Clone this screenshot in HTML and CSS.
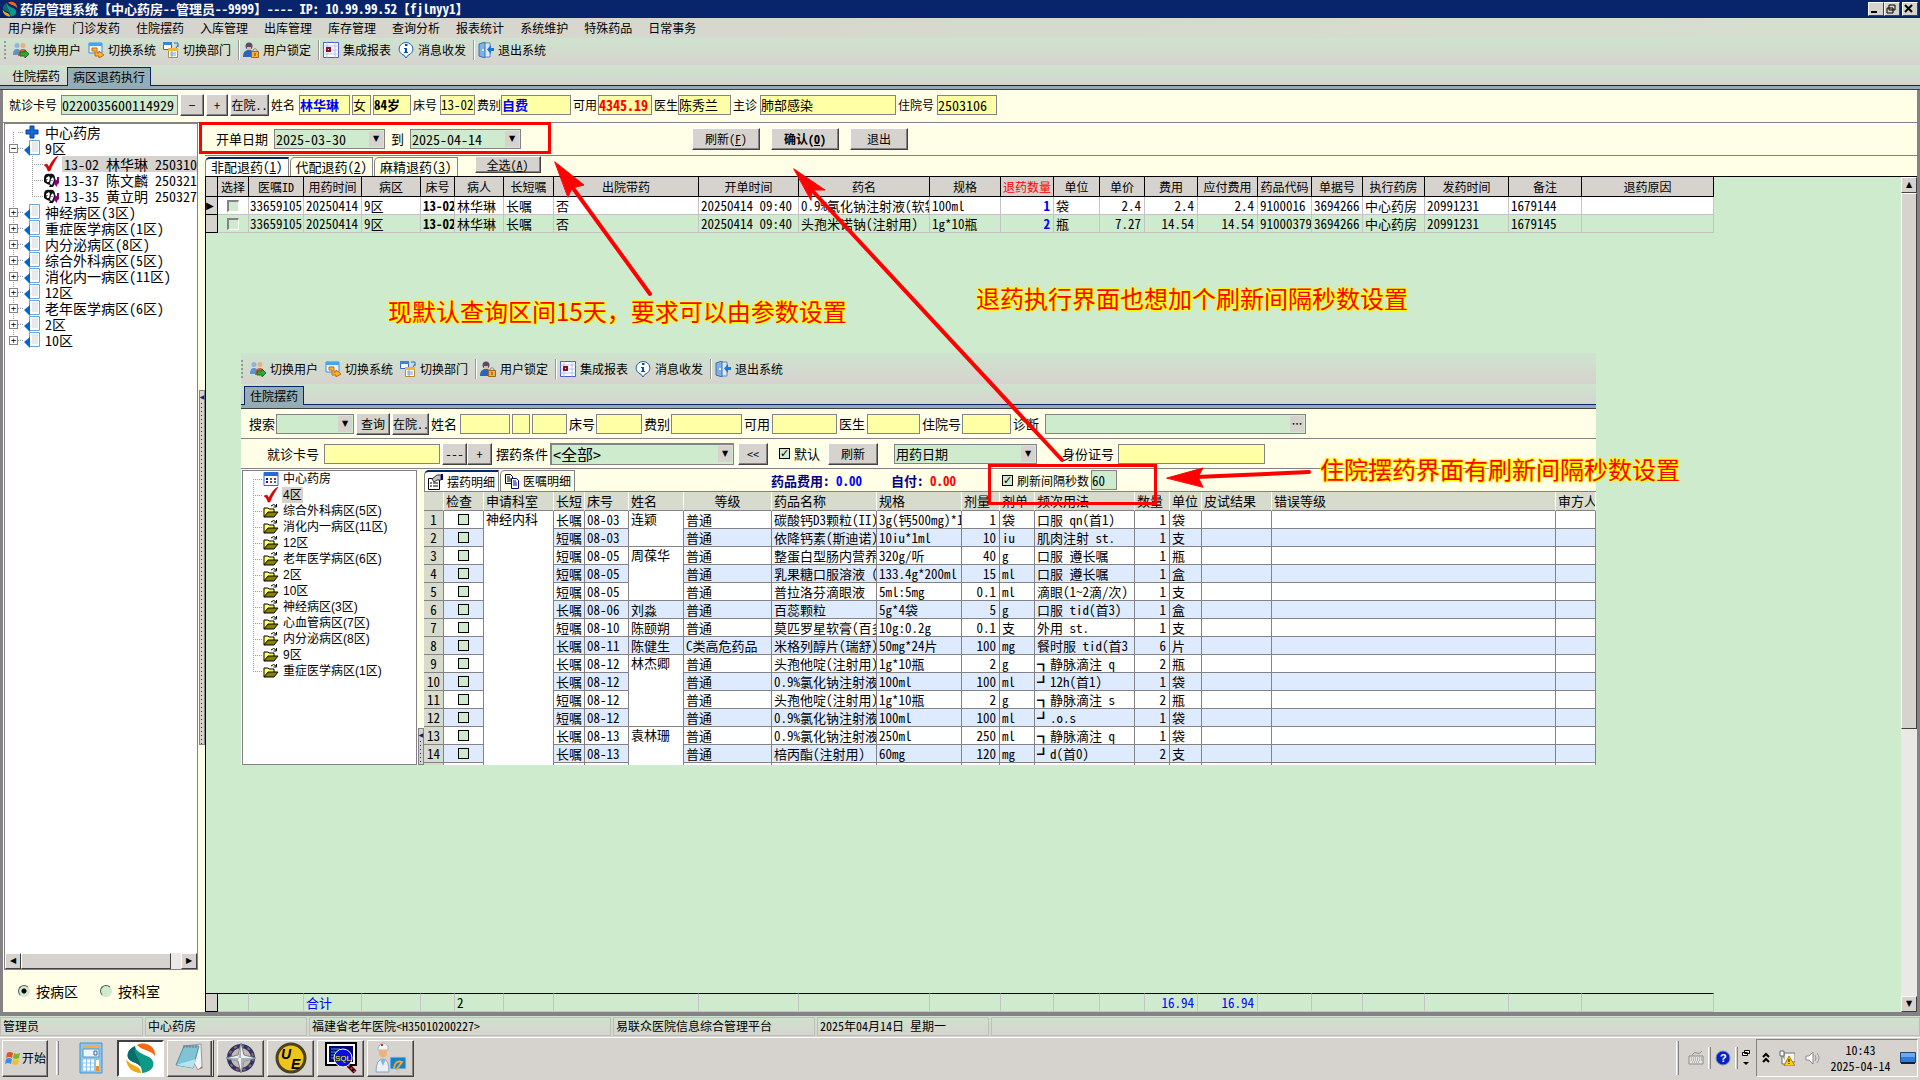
FILE: index.html
```html
<!DOCTYPE html>
<html lang="zh-CN">
<head>
    <meta charset="UTF-8">
    <meta name="viewport" content="width=device-width, initial-scale=1.0">
    <title>药房管理系统</title>
    <link rel="stylesheet" href="styles.css">
</head>
<body>
<svg class="defs" aria-hidden="true">
    <symbol id="i-logo" viewBox="0 0 32 32">
        <path d="M12 3C20-1 31 4 30 14 26 8 18 9 12 3z" fill="#f26a12"/>
        <path d="M10 4C1 8 0 17 8 20c7 2 9 5 9 11 12-1 15-11 7-16C16 11 11 10 10 4z" fill="#0c9a86"/>
        <path d="M10 4C1 8 0 17 8 20c3 1 5 2 7 4 2-5-7-10-5-20z" fill="#0a6b6b"/>
        <path d="M1 17c1 9 7 14 15 14 0-8-10-6-15-14z" fill="#efaa1c"/>
    </symbol>
    <symbol id="i-users" viewBox="0 0 16 16">
        <circle cx="4" cy="3.500" r="2.500" fill="#8fb4dc"/><path d="M0 13c0-5 2-6 4-6s4 1 4 6z" fill="#5b93cf"/>
        <circle cx="10" cy="3.500" r="2.500" fill="#e8b07c"/><path d="M5 14c0-5 2-7 5-7s4 2 4 6z" fill="#d9593f"/>
        <path d="M7 10h5V8l4 4-4 4v-2H7z" fill="#35a535" stroke="#16701c"/>
    </symbol>
    <symbol id="i-system" viewBox="0 0 16 16">
        <path d="M1 1h13v10H1z" fill="#e8f4ff" stroke="#3c8ddb"/><path d="M1 1h13v3H1z" fill="#49a4ee"/>
        <path d="M4 6h5v5h2V9l5 4-5 3v-2H7V9H4z" fill="#ffb52e" stroke="#c8690b"/>
    </symbol>
    <symbol id="i-dept" viewBox="0 0 16 16">
        <path d="M.5.5h8v7h-8z" fill="#fff" stroke="#3166c4"/><path d="M0 0h9v3H0z" fill="#3f7fe0"/>
        <path d="M11 1h4v4M15 3l-2 3" fill="none" stroke="#3166c4"/>
        <path d="M5.500 6.500h9v9h-9z" fill="#fff" stroke="#b58d2b"/><path d="M5 6h10v3H5z" fill="#e9b83a"/>
        <path d="M7 11h6M7 13h6M9 9v6" stroke="#7aa0d0"/>
    </symbol>
    <symbol id="i-lock" viewBox="0 0 16 16">
        <circle cx="6" cy="4" r="3.500" fill="#5a4a68"/><path d="M4 5h4v3H4z" fill="#e5b793"/>
        <path d="M0 15c0-5 2-7 6-7s6 2 6 7z" fill="#2f63b5"/>
        <path d="M10 10V8q2-3 4 0v2" fill="none" stroke="#8d8d8d"/><path d="M8.500 9.500h7v6h-7z" fill="#f3b13b" stroke="#a66512"/>
        <path d="M12 11v3" stroke="#7a4300"/>
    </symbol>
    <symbol id="i-report" viewBox="0 0 16 16">
        <path d="M.5.5h15v15H.5z" fill="#fff" stroke="#4a5ad0"/><path d="M.5 4h15M.5 8h15M.5 12h15M4 .5v15M12 .5v15" stroke="#b9bff2"/>
        <path d="M4 6h3v3H4z" fill="#fff" stroke="#8c1020" stroke-width="2"/>
    </symbol>
    <symbol id="i-info" viewBox="0 0 16 16">
        <path d="M8 .5a7 6.500 0 0 1 2 12.700L8 16l-2-2.800A7 6.500 0 0 1 8 .5z" fill="#fff" stroke="#1b5fa8"/>
        <path d="M7 2h2.500v2H7zM6 6h3v4h1v1H6v-1h1V7H6z" fill="#0a4fb0"/>
    </symbol>
    <symbol id="i-exit" viewBox="0 0 16 16">
        <path d="M6 1h6v14H6" fill="#dbe9fa" stroke="#5c88c2"/><path d="M1 2l6-2v16l-6-2z" fill="#7fb0e6" stroke="#3f70b5"/>
        <circle cx="5" cy="8" r="1" fill="#fff"/><path d="M16 6h-3V3L9 7.500 13 12V9h3z" fill="#1b74d8"/>
    </symbol>
    <symbol id="i-plus" viewBox="0 0 16 16"><path d="M6 2h4v4h4v4h-4v4H6v-4H2V6h4z" fill="#1569d6" stroke="#0a3f94"/></symbol>
    <symbol id="i-ward" viewBox="0 0 16 16">
        <path d="M5.500.5h10v14h-10z" fill="#fbfdff" stroke="#6ba3d6"/><path d="M8 3h6M8 5h6M8 7h6M8 9h6M8 11h6" stroke="#d2d6da"/>
        <path d="M0 10l6-5v11z" fill="#0a62cf"/>
    </symbol>
    <symbol id="i-tick" viewBox="0 0 16 16"><path d="M1 9l3-1 2 3c2-5 5-9 9-11-3 5-6 9-8 15H5C4 12 3 10 1 9z" fill="#e80000" stroke="#900" stroke-width=".5"/></symbol>
    <symbol id="i-face" viewBox="0 0 16 16">
        <path d="M1 6c0-4 3-5 6-4 3-1 5 1 5 4l1 3-3 6H6l1-2-3-1-3-2z" fill="#111"/>
        <path d="M3 6l3-2 1 2-1 4H4z" fill="#fff"/><path d="M8 7l2-2 1 3-2 5-2-1z" fill="#fff"/>
        <path d="M4 7v1M9 8v1" stroke="#111"/><path d="M14 5h2v6l-2 2v2l-4-4 3-3h1z" fill="#850085"/>
    </symbol>
    <symbol id="i-calendar" viewBox="0 0 16 16">
        <path d="M1 1.500h14v13H1z" fill="#fff" stroke="#2a6ad8"/><path d="M1 1h14v4H1z" fill="#2a6ad8"/>
        <path d="M3 8h2M3 11h2" stroke="#30a" stroke-width="2"/><path d="M7 8h2M11 11h2" stroke="#0a8a50" stroke-width="2"/><path d="M11 8h2M7 11h2" stroke="#c22" stroke-width="2"/>
    </symbol>
    <symbol id="i-folder" viewBox="0 0 16 16">
        <path d="M1 14V5h4l1 1h5v3" fill="#ffff6b" stroke="#000"/><path d="M1 14l4-5h10l-4 5z" fill="#848200" stroke="#000"/>
        <path d="M8 3q3-3 5 0M13.500 1v3h-3" fill="none" stroke="#000"/>
    </symbol>
    <symbol id="i-form" viewBox="0 0 16 16">
        <path d="M.5 4.500h11v11H.5z" fill="#fff" stroke="#000"/><path d="M2 9h2M5 9h5M2 12h2M5 12h5" stroke="#000"/>
        <path d="M4 5l5-4h4v5H9L6 8z" fill="#c6c3c6" stroke="#333"/><path d="M13 0h2v6h-2z" fill="#000084"/>
    </symbol>
    <symbol id="i-copy" viewBox="0 0 16 16">
        <path d="M1.500 1.500h5l2 2v7h-7z" fill="#fff" stroke="#000"/><path d="M3 4h3M3 6h4M3 8h4" stroke="#000"/>
        <path d="M7.500 5.500h5l2 2v8h-7z" fill="#fff" stroke="#000084"/><path d="M9 8h3M9 10h4M9 12h4" stroke="#000084"/>
    </symbol>
    <symbol id="i-flag" viewBox="0 0 16 16">
        <path d="M2 3q3-2 6 0L7 8q-3-2-6 0z" fill="#e8502a"/><path d="M9 3q3 2 6 0l-1 5q-3 2-6 0z" fill="#76b82a"/>
        <path d="M1 9q3-2 6 0l-1 5q-3-2-6 0z" fill="#3b8de0"/><path d="M8 9q3 2 6 0l-1 5q-3 2-6 0z" fill="#f5be2b"/>
    </symbol>
</svg>

<header class="titlebar">
    <svg class="icon"><use href="#i-logo"/></svg>
    <h1>药房管理系统【中心药房--管理员--9999】---- IP: 10.99.99.52【fjlnyy1】</h1>
    <div class="winbtns">
        <button type="button" aria-label="最小化"><svg viewBox="0 0 12 10"><path d="M2 8h6" stroke="#000" stroke-width="2"/></svg></button>
        <button type="button" aria-label="还原"><svg viewBox="0 0 12 10"><path d="M4 1h6v5H4zM2 4h6v5H2z" fill="#d6d3ce" stroke="#000"/></svg></button>
        <button type="button" aria-label="关闭"><svg viewBox="0 0 12 10"><path d="M2 1l7 7M9 1L2 8" stroke="#000" stroke-width="2"/></svg></button>
    </div>
</header>

<nav class="menubar">
    <a href="#">用户操作</a><a href="#">门诊发药</a><a href="#">住院摆药</a><a href="#">入库管理</a><a href="#">出库管理</a><a href="#">库存管理</a><a href="#">查询分析</a><a href="#">报表统计</a><a href="#">系统维护</a><a href="#">特殊药品</a><a href="#">日常事务</a>
</nav>

<div class="toolbar">
    <i class="grip"></i>
    <button type="button"><svg class="icon"><use href="#i-users"/></svg>切换用户</button>
    <button type="button"><svg class="icon"><use href="#i-system"/></svg>切换系统</button>
    <button type="button"><svg class="icon"><use href="#i-dept"/></svg>切换部门</button>
    <i class="sep"></i>
    <button type="button"><svg class="icon"><use href="#i-lock"/></svg>用户锁定</button>
    <i class="sep"></i>
    <button type="button"><svg class="icon"><use href="#i-report"/></svg>集成报表</button>
    <button type="button"><svg class="icon"><use href="#i-info"/></svg>消息收发</button>
    <i class="sep"></i>
    <button type="button"><svg class="icon"><use href="#i-exit"/></svg>退出系统</button>
</div>

<div class="pagetabs">
    <a href="#">住院摆药</a><a href="#" class="active">病区退药执行</a>
</div>

<main class="workspace">
    <form class="patient">
        <label for="card">就诊卡号</label><input id="card" class="green long" value="0220035600114929">
        <button type="button" class="btn">−</button><button type="button" class="btn">+</button><button type="button" class="btn">在院..</button>
        <label for="pname">姓名</label><input id="pname" class="strong blue" value="林华琳">
        <input aria-label="性别" value="女"><input aria-label="年龄" class="strong" value="84岁">
        <label for="bed">床号</label><input id="bed" value="13-02">
        <label for="feetype">费别</label><input id="feetype" class="strong blue" value="自费">
        <label for="avail">可用</label><input id="avail" class="strong red long" value="4345.19">
        <label for="doctor">医生</label><input id="doctor" value="陈秀兰">
        <label for="diag">主诊</label><input id="diag" value="肺部感染">
        <label for="inno">住院号</label><input id="inno" class="long" value="2503106">
    </form>

    <div class="columns">
        <aside class="wards">
            <div class="treebox">
                <ul class="tree">
                    <li><i class="exp none"></i><i class="stub"></i><svg class="icon"><use href="#i-plus"/></svg><span>中心药房</span></li>
                    <li><i class="exp">−</i><i class="stub"></i><svg class="icon"><use href="#i-ward"/></svg><span>9区</span></li>
                    <li class="branch">
                        <ul>
                            <li><i class="stub"></i><svg class="icon"><use href="#i-tick"/></svg><span class="selected">13-02 林华琳 250310</span></li>
                            <li><i class="stub"></i><svg class="icon"><use href="#i-face"/></svg><span>13-37 陈文麟 250321</span></li>
                            <li><i class="stub"></i><svg class="icon"><use href="#i-face"/></svg><span>13-35 黄立明 250327</span></li>
                        </ul>
                    </li>
                    <li><i class="exp">+</i><i class="stub"></i><svg class="icon"><use href="#i-ward"/></svg><span>神经病区(3区)</span></li>
                    <li><i class="exp">+</i><i class="stub"></i><svg class="icon"><use href="#i-ward"/></svg><span>重症医学病区(1区)</span></li>
                    <li><i class="exp">+</i><i class="stub"></i><svg class="icon"><use href="#i-ward"/></svg><span>内分泌病区(8区)</span></li>
                    <li><i class="exp">+</i><i class="stub"></i><svg class="icon"><use href="#i-ward"/></svg><span>综合外科病区(5区)</span></li>
                    <li><i class="exp">+</i><i class="stub"></i><svg class="icon"><use href="#i-ward"/></svg><span>消化内一病区(11区)</span></li>
                    <li><i class="exp">+</i><i class="stub"></i><svg class="icon"><use href="#i-ward"/></svg><span>12区</span></li>
                    <li><i class="exp">+</i><i class="stub"></i><svg class="icon"><use href="#i-ward"/></svg><span>老年医学病区(6区)</span></li>
                    <li><i class="exp">+</i><i class="stub"></i><svg class="icon"><use href="#i-ward"/></svg><span>2区</span></li>
                    <li><i class="exp">+</i><i class="stub"></i><svg class="icon"><use href="#i-ward"/></svg><span>10区</span></li>
                </ul>
                <div class="hscroll"><i class="sb">◀</i><i class="thumb"></i><i class="track"></i><i class="sb">▶</i></div>
            </div>
            <div class="groupby">
                <label><input type="radio" name="groupby" checked>按病区</label>
                <label><input type="radio" name="groupby">按科室</label>
            </div>
        </aside>
        <div class="splitter"><i>◀</i></div>

        <section class="returns">
            <div class="actions">
                <div class="range">
                    <label for="from">开单日期</label><span class="combo"><input id="from" value="2025-03-30"></span>
                    <label for="to">到</label><span class="combo"><input id="to" value="2025-04-14"></span>
                </div>
                <div class="buttons">
                    <button type="button" class="btn">刷新(<u>F</u>)</button>
                    <button type="button" class="btn strong">确认(<u>O</u>)</button>
                    <button type="button" class="btn">退出</button>
                </div>
            </div>
            <div class="gridtabs">
                <a href="#" class="active">非配退药(<u>1</u>)</a><a href="#">代配退药(<u>2</u>)</a><a href="#">麻精退药(<u>3</u>)</a>
                <button type="button" class="btn">全选(<u>A</u>)</button>
            </div>
            <div class="gridarea">
                <div class="gridbody">
                    <table class="grid">
                        <colgroup><col class="c12"><col class="c31"><col class="c55"><col class="c58"><col class="c59"><col class="c34"><col class="c49"><col class="c50"><col class="c145"><col class="c100"><col class="c131"><col class="c71"><col class="c53"><col class="c46"><col class="c45"><col class="c53"><col class="c60"><col class="c54"><col class="c51"><col class="c62"><col class="c84"><col class="c73"><col class="c132"></colgroup>
                        <thead>
                        <tr><th></th><th>选择</th><th>医嘱ID</th><th>用药时间</th><th>病区</th><th>床号</th><th>病人</th><th>长短嘱</th><th>出院带药</th><th>开单时间</th><th>药名</th><th>规格</th><th class="red">退药数量</th><th>单位</th><th>单价</th><th>费用</th><th>应付费用</th><th>药品代码</th><th>单据号</th><th>执行药房</th><th>发药时间</th><th>备注</th><th>退药原因</th></tr>
                        </thead>
                        <tbody>
                        <tr><td class="mark">▶</td><td class="mid"><input type="checkbox" aria-label="选择 1679144"></td><td class="clip">33659105</td><td>20250414</td><td>9区</td><td class="strong">13-02</td><td>林华琳</td><td>长嘱</td><td>否</td><td>20250414 09:40</td><td>0.9%氯化钠注射液(软袋)</td><td>100ml</td><td class="num strong blue">1</td><td>袋</td><td class="num">2.4</td><td class="num">2.4</td><td class="num">2.4</td><td>9100016</td><td class="clip">3694266</td><td>中心药房</td><td>20991231</td><td>1679144</td><td></td></tr>
                        <tr><td class="mark"></td><td class="mid"><input type="checkbox" aria-label="选择 1679145"></td><td class="clip">33659105</td><td>20250414</td><td>9区</td><td class="strong">13-02</td><td>林华琳</td><td>长嘱</td><td>否</td><td>20250414 09:40</td><td>头孢米诺钠(注射用)</td><td>1g*10瓶</td><td class="num strong blue">2</td><td>瓶</td><td class="num">7.27</td><td class="num">14.54</td><td class="num">14.54</td><td>91000379</td><td class="clip">3694266</td><td>中心药房</td><td>20991231</td><td>1679145</td><td></td></tr>
                        </tbody>
                    </table>
                    <table class="grid total">
                        <colgroup><col class="c12"><col class="c31"><col class="c55"><col class="c58"><col class="c59"><col class="c34"><col class="c49"><col class="c50"><col class="c145"><col class="c100"><col class="c131"><col class="c71"><col class="c53"><col class="c46"><col class="c45"><col class="c53"><col class="c60"><col class="c54"><col class="c51"><col class="c62"><col class="c84"><col class="c73"><col class="c132"></colgroup>
                        <tbody>
                        <tr><td class="mark"></td><td></td><td></td><td class="blue">合计</td><td></td><td></td><td>2</td><td></td><td></td><td></td><td></td><td></td><td></td><td></td><td></td><td class="num blue">16.94</td><td class="num blue">16.94</td><td></td><td></td><td></td><td></td><td></td><td></td></tr>
                        </tbody>
                    </table>
                </div>
                <div class="vscroll"><i class="sb">▲</i><i class="thumb"></i><i class="track"></i><i class="sb">▼</i></div>

                <section class="dispense" aria-label="住院摆药">
                    <div class="toolbar">
                        <i class="grip"></i>
                        <button type="button"><svg class="icon"><use href="#i-users"/></svg>切换用户</button>
                        <button type="button"><svg class="icon"><use href="#i-system"/></svg>切换系统</button>
                        <button type="button"><svg class="icon"><use href="#i-dept"/></svg>切换部门</button>
                        <i class="sep"></i>
                        <button type="button"><svg class="icon"><use href="#i-lock"/></svg>用户锁定</button>
                        <i class="sep"></i>
                        <button type="button"><svg class="icon"><use href="#i-report"/></svg>集成报表</button>
                        <button type="button"><svg class="icon"><use href="#i-info"/></svg>消息收发</button>
                        <i class="sep"></i>
                        <button type="button"><svg class="icon"><use href="#i-exit"/></svg>退出系统</button>
                    </div>
                    <div class="pagetabs"><a href="#" class="active">住院摆药</a></div>
                    <form class="search">
                        <label for="find">搜索</label><span class="combo"><select id="find"><option></option></select></span>
                        <button type="button" class="btn">查询</button><button type="button" class="btn">在院..</button>
                        <label for="n1">姓名</label><input id="n1"><input aria-label="性别"><input aria-label="年龄">
                        <label for="n2">床号</label><input id="n2"><label for="n3">费别</label><input id="n3">
                        <label for="n4">可用</label><input id="n4"><label for="n5">医生</label><input id="n5">
                        <label for="n6">住院号</label><input id="n6"><label for="n7">诊断</label><span class="combo more"><input id="n7"></span>
                    </form>
                    <form class="cond">
                        <label for="m1">就诊卡号</label><input id="m1">
                        <button type="button" class="btn">---</button><button type="button" class="btn">+</button>
                        <label for="m2">摆药条件</label><span class="combo big"><select id="m2"><option>&lt;全部&gt;</option></select></span>
                        <button type="button" class="btn fold">&lt;&lt;</button>
                        <label class="check"><input type="checkbox" checked>默认</label>
                        <button type="button" class="btn wide">刷新</button>
                        <span class="combo"><select aria-label="日期类型"><option>用药日期</option></select></span>
                        <label for="m3" class="right">身份证号</label><input id="m3">
                    </form>
                    <div class="lower">
                        <ul class="tree small">
                            <li><i class="stub"></i><svg class="icon"><use href="#i-calendar"/></svg><span>中心药房</span></li>
                            <li><i class="stub"></i><svg class="icon"><use href="#i-tick"/></svg><span class="selected">4区</span></li>
                            <li><i class="stub"></i><svg class="icon"><use href="#i-folder"/></svg><span>综合外科病区(5区)</span></li>
                            <li><i class="stub"></i><svg class="icon"><use href="#i-folder"/></svg><span>消化内一病区(11区)</span></li>
                            <li><i class="stub"></i><svg class="icon"><use href="#i-folder"/></svg><span>12区</span></li>
                            <li><i class="stub"></i><svg class="icon"><use href="#i-folder"/></svg><span>老年医学病区(6区)</span></li>
                            <li><i class="stub"></i><svg class="icon"><use href="#i-folder"/></svg><span>2区</span></li>
                            <li><i class="stub"></i><svg class="icon"><use href="#i-folder"/></svg><span>10区</span></li>
                            <li><i class="stub"></i><svg class="icon"><use href="#i-folder"/></svg><span>神经病区(3区)</span></li>
                            <li><i class="stub"></i><svg class="icon"><use href="#i-folder"/></svg><span>心血管病区(7区)</span></li>
                            <li><i class="stub"></i><svg class="icon"><use href="#i-folder"/></svg><span>内分泌病区(8区)</span></li>
                            <li><i class="stub"></i><svg class="icon"><use href="#i-folder"/></svg><span>9区</span></li>
                            <li><i class="stub"></i><svg class="icon"><use href="#i-folder"/></svg><span>重症医学病区(1区)</span></li>
                        </ul>
                        <div class="splitter end"><i>◀</i></div>
                        <div class="detail">
                            <div class="gridtabs">
                                <a href="#" class="active"><svg class="icon"><use href="#i-form"/></svg>摆药明细</a><a href="#"><svg class="icon"><use href="#i-copy"/></svg>医嘱明细</a>
                                <p class="fees"><span>药品费用: <b class="blue">0.00</b></span><span>自付: <b class="red">0.00</b></span></p>
                                <label class="check"><input type="checkbox" checked>刷新间隔秒数</label><input class="green secs" aria-label="刷新间隔秒数" value="60">
                            </div>
                            <table class="orders">
                                <colgroup><col class="c20"><col class="c40"><col class="c70"><col class="c31"><col class="c44"><col class="c55"><col class="c88"><col class="c105"><col class="c85"><col class="c38"><col class="c35"><col class="c100"><col class="c35"><col class="c32"><col class="c70"><col class="c284"><col class="c40"></colgroup>
                                <thead>
                                <tr><th></th><th>检查</th><th>申请科室</th><th>长短</th><th>床号</th><th>姓名</th><th class="mid">等级</th><th>药品名称</th><th>规格</th><th>剂量</th><th>剂单</th><th>频次用法</th><th>数量</th><th>单位</th><th>皮试结果</th><th>错误等级</th><th>审方人</th></tr>
                                </thead>
                                <tbody>
                                <tr><th>1</th><td class="mid"><input type="checkbox" aria-label="检查 1"></td><td rowspan="15" class="merged">神经内科</td><td>长嘱</td><td>08-03</td><td rowspan="2" class="merged">连颖</td><td>普通</td><td>碳酸钙D3颗粒(II)</td><td>3g(钙500mg)*10</td><td class="num">1</td><td>袋</td><td>口服 qn(首1)</td><td class="num">1</td><td>袋</td><td></td><td></td><td></td></tr>
                                <tr><th>2</th><td class="mid"><input type="checkbox" aria-label="检查 2"></td><td>短嘱</td><td>08-03</td><td>普通</td><td>依降钙素(斯迪诺)</td><td>10iu*1ml</td><td class="num">10</td><td>iu</td><td>肌肉注射 st.</td><td class="num">1</td><td>支</td><td></td><td></td><td></td></tr>
                                <tr><th>3</th><td class="mid"><input type="checkbox" aria-label="检查 3"></td><td>短嘱</td><td>08-05</td><td rowspan="3" class="merged">周葆华</td><td>普通</td><td>整蛋白型肠内营养剂</td><td>320g/听</td><td class="num">40</td><td>g</td><td>口服 遵长嘱</td><td class="num">1</td><td>瓶</td><td></td><td></td><td></td></tr>
                                <tr><th>4</th><td class="mid"><input type="checkbox" aria-label="检查 4"></td><td>短嘱</td><td>08-05</td><td>普通</td><td>乳果糖口服溶液 (杜</td><td>133.4g*200ml</td><td class="num">15</td><td>ml</td><td>口服 遵长嘱</td><td class="num">1</td><td>盒</td><td></td><td></td><td></td></tr>
                                <tr><th>5</th><td class="mid"><input type="checkbox" aria-label="检查 5"></td><td>短嘱</td><td>08-05</td><td>普通</td><td>普拉洛芬滴眼液</td><td>5ml:5mg</td><td class="num">0.1</td><td>ml</td><td>滴眼(1~2滴/次)</td><td class="num">1</td><td>支</td><td></td><td></td><td></td></tr>
                                <tr><th>6</th><td class="mid"><input type="checkbox" aria-label="检查 6"></td><td>长嘱</td><td>08-06</td><td>刘淼</td><td>普通</td><td>百蕊颗粒</td><td>5g*4袋</td><td class="num">5</td><td>g</td><td>口服 tid(首3)</td><td class="num">1</td><td>盒</td><td></td><td></td><td></td></tr>
                                <tr><th>7</th><td class="mid"><input type="checkbox" aria-label="检查 7"></td><td>短嘱</td><td>08-10</td><td>陈颐朔</td><td>普通</td><td>莫匹罗星软膏(百多邦)</td><td>10g:0.2g</td><td class="num">0.1</td><td>支</td><td>外用 st.</td><td class="num">1</td><td>支</td><td></td><td></td><td></td></tr>
                                <tr><th>8</th><td class="mid"><input type="checkbox" aria-label="检查 8"></td><td>长嘱</td><td>08-11</td><td>陈健生</td><td>C类高危药品</td><td>米格列醇片(瑞舒)</td><td>50mg*24片</td><td class="num">100</td><td>mg</td><td>餐时服 tid(首3</td><td class="num">6</td><td>片</td><td></td><td></td><td></td></tr>
                                <tr><th>9</th><td class="mid"><input type="checkbox" aria-label="检查 9"></td><td>长嘱</td><td>08-12</td><td rowspan="4" class="merged">林杰卿</td><td>普通</td><td>头孢他啶(注射用)</td><td>1g*10瓶</td><td class="num">2</td><td>g</td><td>┓静脉滴注 q</td><td class="num">2</td><td>瓶</td><td></td><td></td><td></td></tr>
                                <tr><th>10</th><td class="mid"><input type="checkbox" aria-label="检查 10"></td><td>长嘱</td><td>08-12</td><td>普通</td><td>0.9%氯化钠注射液</td><td>100ml</td><td class="num">100</td><td>ml</td><td>┛12h(首1)</td><td class="num">1</td><td>袋</td><td></td><td></td><td></td></tr>
                                <tr><th>11</th><td class="mid"><input type="checkbox" aria-label="检查 11"></td><td>短嘱</td><td>08-12</td><td>普通</td><td>头孢他啶(注射用)</td><td>1g*10瓶</td><td class="num">2</td><td>g</td><td>┓静脉滴注 s</td><td class="num">2</td><td>瓶</td><td></td><td></td><td></td></tr>
                                <tr><th>12</th><td class="mid"><input type="checkbox" aria-label="检查 12"></td><td>短嘱</td><td>08-12</td><td>普通</td><td>0.9%氯化钠注射液</td><td>100ml</td><td class="num">100</td><td>ml</td><td>┛.o.s</td><td class="num">1</td><td>袋</td><td></td><td></td><td></td></tr>
                                <tr><th>13</th><td class="mid"><input type="checkbox" aria-label="检查 13"></td><td>长嘱</td><td>08-13</td><td rowspan="3" class="merged">袁林珊</td><td>普通</td><td>0.9%氯化钠注射液</td><td>250ml</td><td class="num">250</td><td>ml</td><td>┓静脉滴注 q</td><td class="num">1</td><td>袋</td><td></td><td></td><td></td></tr>
                                <tr><th>14</th><td class="mid"><input type="checkbox" aria-label="检查 14"></td><td>长嘱</td><td>08-13</td><td>普通</td><td>棓丙酯(注射用)</td><td>60mg</td><td class="num">120</td><td>mg</td><td>┛d(首0)</td><td class="num">2</td><td>支</td><td></td><td></td><td></td></tr>
                                <tr><th></th><td></td><td></td><td></td><td></td><td></td><td></td><td></td><td></td><td></td><td></td><td></td><td></td><td></td><td></td></tr>
                                </tbody>
                            </table>
                        </div>
                    </div>
                </section>
            </div>
        </section>
    </div>
</main>

<footer class="statusbar">
    <span>管理员</span><span>中心药房</span><span>福建省老年医院&lt;H35010200227&gt;</span><span>易联众医院信息综合管理平台</span><span>2025年04月14日 星期一</span><span></span>
</footer>

<footer class="taskbar">
    <button type="button" class="btn start"><svg class="icon"><use href="#i-flag"/></svg>开始</button>
    <i class="bar"></i>
    <button type="button" class="task flat" aria-label="计算器">
        <svg viewBox="0 0 32 32">
            <path d="M5 1h22v30H5z" fill="#8ec5ec" stroke="#4a93cc"/><path d="M8 4h16v2H8z" fill="#f3ad4a"/><path d="M8 7h16v8H8z" fill="#eef6fb" stroke="#5b95bd"/>
            <path d="M19 9h3v4h-3z" fill="none" stroke="#39648a"/>
            <path d="M8 19h12M8 23h12M8 27h12" stroke="#fff" stroke-width="3" stroke-dasharray="3 1"/><path d="M21 18h3v6h-3z" fill="#fff"/><path d="M21 24h3v5h-3z" fill="#f18d1d"/>
        </svg>
    </button>
    <button type="button" class="task active" aria-label="药房管理系统"><svg><use href="#i-logo"/></svg></button>
    <button type="button" class="task btn stack" aria-label="记事本">
        <svg viewBox="0 0 32 32">
            <path d="M21 6l8 20-5 2z" fill="#a98a54"/><path d="M10 4l17-2 1 22-4 4z" fill="#f1f4f2" stroke="#999"/>
            <path d="M10 4h15l-6 22-17-3z" fill="#7fc3d5" stroke="#4d93a8"/><path d="M10 3v3M13 3v3M16 3v3M19 3v3M22 3v3" stroke="#777"/>
            <path d="M2 23l17 3 3-9z" fill="#b9e3ec"/>
        </svg>
    </button>
    <button type="button" class="task btn" aria-label="导航">
        <svg viewBox="0 0 32 32">
            <circle cx="16" cy="16" r="12" fill="#c8b9b0" stroke="#26356b" stroke-width="4"/><circle cx="16" cy="16" r="12" fill="none" stroke="#a5604c" stroke-width="2" stroke-dasharray="3 4"/>
            <path d="M16 1l3 12 12 3-12 3-3 12-3-12-12-3 12-3z" fill="#eef0f3" stroke="#77808c"/><path d="M16 1v30l3-12 12-3H1l12 3z" fill="#a9b1bb"/>
        </svg>
    </button>
    <button type="button" class="task btn" aria-label="UltraEdit">
        <svg viewBox="0 0 32 32">
            <circle cx="16" cy="16" r="14" fill="#efc51d" stroke="#4c4222" stroke-width="3"/>
            <text x="6" y="17" class="ue">U</text><text x="16" y="27" class="ue">E</text>
        </svg>
    </button>
    <button type="button" class="task btn" aria-label="SQL">
        <svg viewBox="0 0 32 32">
            <path d="M1 1h30v22H1z" fill="#fff" stroke="#000" stroke-width="2"/><path d="M4 4h24v16H4z" fill="#000a6e"/>
            <path d="M6 7h9M6 10h7M6 13h7M6 16h6" stroke="#32a0ff"/><path d="M23 23l7 7" stroke="#000" stroke-width="4"/><path d="M23 23l7 7" stroke="#f22" stroke-width="2" stroke-dasharray="2 2"/>
            <circle cx="18" cy="16" r="9" fill="#0a10d8" stroke="#fff"/><text x="10" y="19" class="sql">SQL</text>
        </svg>
    </button>
    <button type="button" class="task btn" aria-label="护士站">
        <svg viewBox="0 0 32 32">
            <path d="M3 6q4-9 10-2v4H3z" fill="#f3f7fa" stroke="#9bb"/><path d="M6 3h2" stroke="#d22" stroke-width="2"/>
            <path d="M4 8h8v5q-4 5-8 0z" fill="#f2b17b"/><path d="M1 30q0-13 7-13 6 0 6 13z" fill="#e9f0f7" stroke="#8aa3c0"/>
            <path d="M5 17l3 7 3-7" fill="#8db3dd"/><path d="M15 15h16v12H15z" fill="#1682c4" stroke="#bcd"/><path d="M19 26q1-8 8-6l-6 8" fill="none" stroke="#f0a63c" stroke-width="2"/>
            <path d="M21 28h4v3h-4z" fill="#ccc"/>
        </svg>
    </button>
    <div class="lang">
        <i class="bar"></i>
        <svg viewBox="0 0 16 16"><path d="M1 6h14v8H1z" fill="#e4e4e0" stroke="#8a8a86"/><path d="M3 8h11M3 10h11M4 12h8" stroke="#8a8a86" stroke-dasharray="1 1"/><path d="M4 5q3-4 5-2t5-2" fill="none" stroke="#8a8a86"/></svg>
        <i class="bar short"></i>
        <svg viewBox="0 0 16 16"><circle cx="8" cy="8" r="7" fill="#0a1ec4" stroke="#7b93a8"/><text x="5" y="12" class="help">?</text></svg>
        <i class="bar short"></i>
        <svg class="narrow" viewBox="0 0 8 16"><path d="M2.500.5h5v3h-5zM.5 2.500h5v3h-5z" fill="#fff" stroke="#000"/><path d="M1 12h6l-3 3z"/></svg>
    </div>
    <div class="tray">
        <svg class="narrow" viewBox="0 0 8 16"><path d="M1 7l3-3 3 3M1 12l3-3 3 3" fill="none" stroke="#000" stroke-width="2"/></svg>
        <svg viewBox="0 0 16 16"><path d="M5 3h11v9H5z" fill="#f3f3f3" stroke="#777"/><path d="M1 1h4v5H1zM3 6v8h5" fill="#fff" stroke="#666"/><path d="M10 6l6 10H5z" fill="#ffcf1a" stroke="#a67c00"/><path d="M10 9v3M10 13v1" stroke="#000"/></svg>
        <svg viewBox="0 0 16 16"><path d="M1 6h3l4-4v12l-4-4H1z" fill="#fff" stroke="#888"/><path d="M10 5q2 3 0 6M12 3q4 5 0 10" fill="none" stroke="#999"/></svg>
        <time>10:43<br>2025-04-14</time>
        <svg viewBox="0 0 16 16"><path d="M.5 2.500h15v10H.5z" fill="#2c7be0" stroke="#24466f"/><path d="M1 3h14v4H1z" fill="#6ba8ef"/><path d="M1 13h14" stroke="#123" stroke-width="2"/></svg>
    </div>
</footer>

<div class="frame frame-dates"></div>
<div class="frame frame-secs"></div>
<svg class="arrows" width="1400" height="520" viewBox="0 0 1400 520" aria-hidden="true">
    <path d="M570 184L650 294M808 186L1062 460M1196 477L1309 472"/>
    <path class="head" d="M555 162L584 185 572 188 568 197zM794 169L825 190 812 190 811 200zM1167 478L1203 468 1198 477 1203 487z"/>
</svg>
<p class="note note-range">现默认查询区间15天，要求可以由参数设置</p>
<p class="note note-refresh">退药执行界面也想加个刷新间隔秒数设置</p>
<p class="note note-has">住院摆药界面有刷新间隔秒数设置</p>
</body>
</html>
```
FILE: styles.css
```css
* {
    box-sizing: border-box;
}

:root {
    --face: #d6d3ce;
    --green: #ceebce;
    --cream: #ffffe7;
    --yellow: #ffffa5;
    --navy: #08246b;
    --gray: #848284;
}

body {
    margin: 0;
    height: 100vh;
    display: flex;
    flex-direction: column;
    overflow: hidden;
    position: relative;
    background: var(--face);
    color: #000;
    font-family: "Noto Sans Mono CJK SC", "Noto Sans CJK SC", sans-serif;
    font-size: 12px;
    line-height: 16px;
}

button, input, select {
    font: inherit;
    color: inherit;
    margin: 0;
    padding: 0;
    border-radius: 0;
}

a {
    color: inherit;
    text-decoration: none;
}

i {
    font-style: normal;
}

ul, p, h1 {
    margin: 0;
    padding: 0;
    list-style: none;
}

label {
    white-space: nowrap;
}

.defs {
    position: absolute;
    width: 0;
    height: 0;
}

.icon {
    width: 16px;
    height: 16px;
    flex: none;
}

.red { color: #f00; }
.blue { color: #00f; }
.strong { font-weight: bold; }

input.red { color: #f00; }
input.blue { color: #00f; }
input.strong, button.strong { font-weight: bold; }

/* title, menu, toolbar */
.titlebar {
    flex: none;
    height: 18px;
    display: flex;
    align-items: center;
    gap: 2px;
    padding: 0 2px;
    background: var(--navy);
    color: #fff;
}

.titlebar h1 {
    flex: 1;
    font-size: 13px;
    line-height: 16px;
}

.winbtns {
    display: flex;
}

.winbtns button {
    width: 16px;
    height: 14px;
    background: var(--face);
    border: 1px solid;
    border-color: #fff #404040 #404040 #fff;
}

.winbtns button:last-child {
    margin-left: 2px;
}

.winbtns svg {
    display: block;
    width: 12px;
    height: 10px;
}

.menubar {
    flex: none;
    height: 20px;
    display: flex;
    gap: 16px;
    padding: 2px 8px;
    background: linear-gradient(90deg, var(--face), #d6dfce);
}

.toolbar {
    flex: none;
    height: 27px;
    display: flex;
    align-items: center;
    padding: 0 4px 4px;
    background: linear-gradient(#cee3ce, var(--face));
}

.toolbar button {
    display: flex;
    align-items: center;
    gap: 4px;
    padding: 0 4px 0 3px;
    background: none;
    border: 0;
}

.grip {
    width: 3px;
    height: 18px;
    margin-right: 3px;
    border-left: 2px dotted #9a9a94;
}

.sep {
    width: 2px;
    height: 20px;
    margin: 0 0 0 3px;
    border-left: 1px solid #9a9a94;
    border-right: 1px solid #fff;
}

.pagetabs {
    flex: none;
    height: 25px;
    display: flex;
    align-items: flex-end;
    padding-left: 5px;
    background: linear-gradient(#cee3ce, var(--face));
    border-bottom: 1px solid #424142;
    box-shadow: inset 0 -3px #94aab5, inset 0 -4px var(--navy);
}

.pagetabs a {
    height: 19px;
    margin-bottom: 3px;
    padding: 1px 7px;
}

.pagetabs .active {
    padding: 1px 5px;
    background: #94aeb5;
    border: 1px solid var(--navy);
    border-bottom: 0;
}

/* controls */
.btn {
    background: var(--face);
    border: 1px solid;
    border-color: #fff #424142 #424142 #fff;
    box-shadow: inset -1px -1px var(--gray);
    height: 22px;
    white-space: nowrap;
}

input:not([type]), select {
    width: 100%;
    min-width: 0;
    height: 20px;
    background: var(--yellow);
    border: 1px solid var(--gray);
    font-size: 13px;
}

input.green:not([type]) {
    background: var(--green);
}

input.long:not([type]) {
    font-size: 14px;
}

.combo {
    display: flex;
    align-items: center;
    height: 20px;
    padding-right: 1px;
    background: var(--green);
    border: 1px solid var(--gray);
}

.combo input:not([type]), .combo select {
    flex: 1;
    height: 18px;
    background: none;
    border: 0;
    appearance: none;
    padding-left: 1px;
}

.combo::after {
    content: "▼";
    width: 14px;
    height: 16px;
    background: var(--face);
    font: 8px/16px "DejaVu Sans", sans-serif;
    text-align: center;
}

.combo.more::after {
    content: "•••";
    font-size: 6px;
}

input[type="checkbox"] {
    appearance: none;
    flex: none;
    width: 11px;
    height: 11px;
    background: var(--green);
    border: 1px solid #000;
    font: bold 11px/9px "DejaVu Sans", sans-serif;
}

input[type="checkbox"]:checked::before {
    content: "✓";
}

.check {
    display: flex;
    align-items: center;
    gap: 4px;
}

/* patient bar */
.workspace {
    flex: 1;
    min-height: 0;
    display: flex;
    flex-direction: column;
    background: var(--cream);
    border: solid var(--gray);
    border-width: 0 3px 4px;
}

.patient {
    height: 33px;
    display: grid;
    grid-template-columns: 50px 117px 24px 22px 39px 26px 51px 19px 38px 25px 35px 22px 70px 23px 54px 22px 53px 25px 136px 37px 60px;
    column-gap: 2px;
    align-items: center;
    padding: 0 0 3px 6px;
    border-bottom: 1px solid var(--gray);
}

/* ward tree */
.columns {
    flex: 1;
    min-height: 0;
    display: flex;
}

.wards {
    width: 195px;
    display: flex;
    flex-direction: column;
}

.treebox {
    flex: 1;
    min-height: 0;
    display: flex;
    flex-direction: column;
    justify-content: space-between;
    margin-left: 1px;
    background: #fff;
    border: 1px solid var(--gray);
}

.tree {
    margin-left: 4px;
    overflow: hidden;
    font-size: 14px;
    background: repeating-linear-gradient(#999 0 1px, transparent 1px 2px) 4px 8px / 1px calc(100% - 16px) no-repeat;
}

.tree li {
    display: flex;
    align-items: center;
    height: 16px;
    white-space: nowrap;
}

.tree li.branch {
    height: auto;
    padding-left: 23px;
}

.branch ul {
    flex: 1;
    background: repeating-linear-gradient(#999 0 1px, transparent 1px 2px) 0 0 / 1px calc(100% - 8px) no-repeat;
}

.exp {
    z-index: 1;
    width: 9px;
    height: 9px;
    background: #fff;
    border: 1px solid var(--gray);
    font: 9px/7px "DejaVu Sans Mono", monospace;
    text-align: center;
}

.exp.none {
    visibility: hidden;
}

.stub {
    width: 6px;
    height: 1px;
    background: repeating-linear-gradient(90deg, #999 0 1px, transparent 1px 2px);
}

.branch .stub {
    width: 11px;
}

.tree span {
    line-height: 16px;
    padding: 0 2px;
    margin-left: 3px;
}

.tree .selected {
    background: var(--face);
}

.hscroll, .vscroll {
    display: flex;
    background: #ebe9e6;
}

.hscroll {
    height: 16px;
}

.sb, .thumb {
    background: var(--face);
    border: 1px solid;
    border-color: #fff #424142 #424142 #fff;
}

.sb {
    width: 16px;
    height: 16px;
    font: 8px/14px "DejaVu Sans", sans-serif;
    text-align: center;
}

.hscroll .thumb {
    flex: 15;
}

.hscroll .track {
    flex: 1;
}

.groupby {
    height: 42px;
    display: flex;
    align-items: center;
    gap: 22px;
    padding-left: 15px;
    font-size: 14px;
}

.groupby label {
    display: flex;
    align-items: center;
    gap: 6px;
}

.groupby input {
    appearance: none;
    width: 12px;
    height: 12px;
    border-radius: 50%;
    border: 1px solid;
    border-color: #555 #ddd #ddd #555;
    background: var(--green);
}

.groupby input:checked {
    background: radial-gradient(#000 0 2px, var(--green) 3px);
}

.splitter {
    width: 7px;
    display: flex;
    align-items: center;
    justify-content: center;
}

.splitter i {
    width: 6px;
    height: 40%;
    padding-top: 2px;
    border: 1px solid var(--gray);
    background: repeating-linear-gradient(var(--navy) 0 1px, var(--face) 1px 4px) 1px 12px / 1px 100% no-repeat var(--face);
    color: var(--navy);
    font: 6px/8px "DejaVu Sans", sans-serif;
}

.splitter.end {
    align-items: flex-end;
    background: var(--cream);
}

.splitter.end i {
    height: 37px;
}

/* returns */
.returns {
    flex: 1;
    min-width: 0;
    display: flex;
    flex-direction: column;
}

.actions {
    height: 33px;
    display: flex;
    padding-bottom: 2px;
    border-top: 2px solid #fff;
    border-bottom: 1px solid var(--gray);
}

.range {
    width: 487px;
    display: flex;
    align-items: center;
    gap: 6px;
    padding-left: 11px;
    font-size: 13px;
}

.range .combo {
    width: 111px;
}

.range input:not([type]) {
    font-size: 14px;
}

.buttons {
    display: flex;
    align-items: center;
    gap: 11px;
}

.buttons .btn {
    min-width: 58px;
    padding: 0 12px;
}

.gridtabs {
    height: 20px;
    display: flex;
    align-items: flex-end;
    font-size: 13px;
}

.gridtabs a {
    height: 19px;
    margin-right: 1px;
    padding: 1px 5px;
    border: 1px solid var(--gray);
    border-bottom: 0;
    border-top-left-radius: 5px;
    white-space: nowrap;
}

.gridtabs .active {
    padding-top: 0;
    background: #fff;
    border-top: 2px solid var(--navy);
}

.gridtabs .btn {
    align-self: flex-start;
    width: 66px;
    height: 17px;
    margin-left: 16px;
    font-size: 12px;
    line-height: 13px;
}

.gridarea {
    flex: 1;
    min-height: 0;
    position: relative;
    display: flex;
    background: var(--green);
    border-top: 1px solid #000;
    border-left: 1px solid #000;
}

.gridbody {
    flex: 1;
    display: flex;
    flex-direction: column;
    justify-content: space-between;
}

.grid, .orders {
    table-layout: fixed;
    border-spacing: 0;
    width: 0;
    font-size: 13px;
}

.grid th, .grid td, .orders th, .orders td {
    height: 18px;
    padding: 0 2px;
    overflow: hidden;
    white-space: nowrap;
    line-height: 16px;
    text-align: left;
}

.grid th {
    height: 20px;
    padding: 0;
    background: var(--face);
    border-right: 1px solid #000;
    border-bottom: 1px solid #000;
    font-size: 12px;
    font-weight: normal;
    text-align: center;
}

.grid td {
    border-right: 1px solid #c6c3c6;
    border-bottom: 1px solid #c6c3c6;
}

.grid tbody tr:first-child {
    background: #fff;
}

.grid td.mark {
    padding: 0;
    background: var(--face);
    border-color: #000;
    font: 10px/16px "DejaVu Sans", sans-serif;
}

.grid input[type="checkbox"] {
    width: 12px;
    height: 12px;
    border-color: var(--gray) #fff #fff var(--gray);
    border-width: 2px 1px 1px 2px;
}

.grid .mid, .orders .mid {
    padding: 0;
    text-align: center;
}

.grid .num, .orders .num {
    padding-right: 3px;
    text-align: right;
}

/* keeps the tail of a long number visible */
.grid .clip {
    direction: rtl;
}

.grid input, .orders input {
    display: block;
    margin: 0 auto;
}

.grid.total td {
    border-top: 1px solid #000;
    height: 19px;
}

.grid.total tbody tr:first-child {
    background: none;
}

.c12 { width: 12px; }
.c20 { width: 20px; }
.c31 { width: 31px; }
.c32 { width: 32px; }
.c34 { width: 34px; }
.c35 { width: 35px; }
.c38 { width: 38px; }
.c40 { width: 40px; }
.c44 { width: 44px; }
.c45 { width: 45px; }
.c46 { width: 46px; }
.c49 { width: 49px; }
.c50 { width: 50px; }
.c51 { width: 51px; }
.c53 { width: 53px; }
.c54 { width: 54px; }
.c55 { width: 55px; }
.c58 { width: 58px; }
.c59 { width: 59px; }
.c60 { width: 60px; }
.c62 { width: 62px; }
.c70 { width: 70px; }
.c71 { width: 71px; }
.c73 { width: 73px; }
.c84 { width: 84px; }
.c85 { width: 85px; }
.c88 { width: 88px; }
.c100 { width: 100px; }
.c105 { width: 105px; }
.c131 { width: 131px; }
.c132 { width: 132px; }
.c145 { width: 145px; }
.c284 { width: 284px; }

.vscroll {
    width: 16px;
    flex-direction: column;
}

.vscroll .thumb {
    flex: 2;
}

.vscroll .track {
    flex: 1;
}

/* dispensing window laid over the grid */
.dispense {
    position: absolute;
    left: 35px;
    top: 176px;
    width: 1355px;
    height: 412px;
    display: flex;
    flex-direction: column;
    overflow: hidden;
    background: var(--cream);
}

.dispense .toolbar {
    height: 31px;
    padding: 0;
}

.dispense .pagetabs {
    padding-left: 3px;
}

.search, .cond {
    display: grid;
    align-items: center;
    flex: none;
    height: 30px;
    border-bottom: 1px solid var(--gray);
    font-size: 13px;
}

.search {
    grid-template-columns: 25px 78px 34px 37px 27px 50px 18px 35px 25px 46px 25px 71px 26px 65px 26px 53px 38px 49px 30px 261px;
    column-gap: 2px;
    padding-left: 8px;
}

.cond {
    grid-template-columns: 57px 118px 25px 29px 54px 188px 41px 49px 66px 147px 77px 150px;
    padding-left: 26px;
}

.cond .btn {
    justify-self: start;
    width: 25px;
}

.cond .btn.fold {
    width: 30px;
}

.cond .btn.wide {
    width: 50px;
}

.cond .right {
    text-align: right;
    padding-right: 4px;
}

.search .btn, .cond .btn {
    font-size: 12px;
}

.cond input:not([type]) {
    justify-self: start;
    width: 98%;
}

.cond .combo {
    margin-right: 4px;
}

.cond .combo.big {
    height: 22px;
    border-width: 2px 1px 1px 2px;
}

.cond .big select {
    font-size: 16px;
}

.lower {
    flex: 1;
    min-height: 0;
    display: flex;
}

.tree.small {
    flex: none;
    width: 175px;
    margin: 1px 0 0 1px;
    padding: 0 0 0 10px;
    border: 1px solid var(--gray);
    font-family: "Liberation Sans", "Noto Sans CJK SC", sans-serif;
    font-size: 12px;
    background-color: #fff;
    background-position: 10px 8px;
    background-size: 1px 192px;
}

.small .stub {
    width: 10px;
}

.small span {
    padding: 0 1px;
}

.detail {
    flex: 1;
    min-width: 0;
}

.detail .gridtabs {
    height: 23px;
    border-bottom: 1px solid var(--gray);
}

.detail .gridtabs a {
    display: flex;
    align-items: center;
    gap: 3px;
    height: 21px;
    padding: 0 3px;
    font-size: 12px;
}

.fees {
    display: flex;
    gap: 29px;
    width: 426px;
    padding-left: 195px;
    color: #000084;
    font-weight: bold;
    line-height: 20px;
    white-space: nowrap;
}

.detail .check {
    height: 21px;
    font-size: 12px;
}

.detail .gridtabs .secs {
    width: 26px;
    margin: 0 0 1px 2px;
}

.orders th {
    background: #d6dbce;
    border-right: 1px solid var(--gray);
    border-bottom: 1px solid var(--gray);
    font-weight: normal;
}

.orders thead th {
    height: 19px;
    border-right-color: #fff;
}

.orders thead .mid {
    text-align: center;
}

.orders tbody th {
    padding: 0;
    text-align: center;
}

.orders td {
    border-right: 1px solid var(--gray);
    border-bottom: 1px solid var(--gray);
}

.orders tbody tr {
    background: #fff;
}

.orders tbody tr:nth-child(even) {
    background: #deebff;
}

.orders .merged {
    vertical-align: top;
    background: #fff;
}

/* status bar and taskbar */
.statusbar {
    flex: none;
    height: 21px;
    display: grid;
    grid-template-columns: 143px 162px 302px 202px 172px 1fr;
    gap: 2px;
    padding: 1px 0;
    background: linear-gradient(#cee3ce, var(--face));
}

.statusbar span {
    padding-left: 2px;
    border: 1px solid #bdbeb5;
}

.taskbar {
    flex: none;
    height: 43px;
    display: flex;
    align-items: center;
    gap: 3px;
    padding: 0 2px 2px;
    border-top: 1px solid #fff;
}

.start {
    display: flex;
    align-items: center;
    width: 46px;
    height: 37px;
    gap: 1px;
    padding: 0 2px;
}

.bar {
    width: 3px;
    height: 34px;
    margin: 0 5px;
    border-left: 1px solid #fff;
    border-right: 1px solid var(--gray);
}

.bar.short {
    height: 22px;
    margin: 0;
}

.task {
    width: 47px;
    height: 37px;
}

.task svg {
    display: block;
    width: 32px;
    height: 32px;
    margin: 0 auto;
}

.task.flat {
    background: none;
    border: 0;
}

.task.active {
    background: #fff;
    border: 2px solid;
    border-color: #424142 #fff #fff #424142;
}

.task.stack {
    border-right: 3px double #424142;
}

.ue {
    font: italic bold 14px "Liberation Sans", sans-serif;
}

.sql {
    font: 8px "Liberation Sans", sans-serif;
    fill: #ff0;
}

.help {
    font: bold 11px "Liberation Sans", sans-serif;
    fill: #fff;
}

.lang {
    display: flex;
    align-items: center;
    gap: 4px;
    margin-left: auto;
}

.lang svg, .tray svg {
    width: 16px;
    height: 16px;
}

.lang .narrow, .tray .narrow {
    width: 8px;
}

.tray {
    width: 162px;
    height: 38px;
    display: flex;
    align-items: center;
    justify-content: space-between;
    margin-left: 3px;
    padding: 0 1px 0 5px;
    border: 1px solid;
    border-color: var(--gray) #fff #fff var(--gray);
}

.tray time {
    text-align: center;
}

/* review marks over the window */
.frame {
    position: absolute;
    border: 3px solid #f00;
}

.frame-dates {
    left: 199px;
    top: 122px;
    width: 352px;
    height: 32px;
}

.frame-secs {
    left: 988px;
    top: 464px;
    width: 169px;
    height: 41px;
}

.arrows {
    position: absolute;
    left: 0;
    top: 0;
    pointer-events: none;
    stroke: #f00;
    stroke-width: 4;
    stroke-linecap: round;
}

.arrows .head {
    fill: #f00;
    stroke-width: 1;
}

.note {
    position: absolute;
    color: #f00;
    font: 24px/32px "Noto Sans CJK SC", sans-serif;
    white-space: nowrap;
    text-shadow: 1px 1px 1px #ff0, -1px -1px 1px #ff0, 1px -1px 1px #ff0, -1px 1px 1px #ff0, 0 0 2px #ff0;
}

.note-range {
    left: 388px;
    top: 295px;
}

.note-refresh {
    left: 976px;
    top: 282px;
}

.note-has {
    left: 1320px;
    top: 453px;
}
```
